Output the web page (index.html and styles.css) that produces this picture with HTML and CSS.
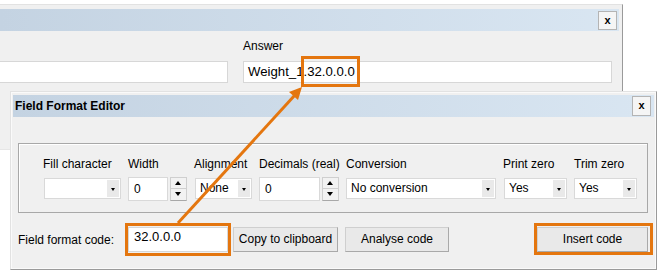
FILE: index.html
```html
<!DOCTYPE html>
<html>
  <head>
    <title>Field Format Editor</title>
    <link rel="stylesheet" href="styles.css">
  </head>
  <body>
    <div class="desktop">
      <!-- Parent dialog (partly hidden) -->
      <div class="window window-back">
        <div class="titlebar">
          <span class="title"></span>
          <span class="close">x</span>
        </div>
        <div class="back-body">
          <div class="field field-left">
            <div class="textbox"></div>
          </div>
          <div class="field field-answer">
            <div class="lbl">Answer</div>
            <div class="textbox">Weight_1.32.0.0.0</div>
          </div>
        </div>
      </div>

      <!-- Field Format Editor -->
      <div class="window window-front">
        <div class="titlebar">
          <span class="title">Field Format Editor</span>
          <span class="close">x</span>
        </div>
        <div class="front-body">
          <div class="group">
            <div class="col col-fill">
              <div class="lbl">Fill character</div>
              <div class="combo"><span class="combo-text"></span><span class="combo-btn"></span></div>
            </div>
            <div class="col col-width">
              <div class="lbl">Width</div>
              <div class="spin">
                <div class="spin-box">0</div>
                <div class="spin-btns"><span class="spin-up"></span><span class="spin-down"></span></div>
              </div>
            </div>
            <div class="col col-align">
              <div class="lbl">Alignment</div>
              <div class="combo"><span class="combo-text">None</span><span class="combo-btn"></span></div>
            </div>
            <div class="col col-decimals">
              <div class="lbl">Decimals (real)</div>
              <div class="spin">
                <div class="spin-box">0</div>
                <div class="spin-btns"><span class="spin-up"></span><span class="spin-down"></span></div>
              </div>
            </div>
            <div class="col col-conv">
              <div class="lbl">Conversion</div>
              <div class="combo"><span class="combo-text">No conversion</span><span class="combo-btn"></span></div>
            </div>
            <div class="col col-print">
              <div class="lbl">Print zero</div>
              <div class="combo"><span class="combo-text">Yes</span><span class="combo-btn"></span></div>
            </div>
            <div class="col col-trim">
              <div class="lbl">Trim zero</div>
              <div class="combo"><span class="combo-text">Yes</span><span class="combo-btn"></span></div>
            </div>
          </div>

          <div class="code-row">
            <span class="code-label">Field format code:</span>
            <div class="textbox code-box">32.0.0.0</div>
            <span class="btn btn-copy">Copy to clipboard</span>
            <span class="btn btn-analyse">Analyse code</span>
            <span class="btn btn-insert">Insert code</span>
          </div>
        </div>
      </div>

      <!-- Callouts -->
      <div class="callout callout-answer"></div>
      <div class="callout callout-code"></div>
      <div class="callout callout-insert"></div>
      <svg class="arrow" width="663" height="271" viewBox="0 0 663 271">
        <line x1="178" y1="223" x2="295" y2="95" stroke="#e4760f" stroke-width="3"/>
        <polygon points="302,87 298,100 289,92" fill="#e4760f"/>
      </svg>
    </div>
  </body>
</html>
```

FILE: styles.css
```css
body, html {
  margin: 0;
  padding: 0;
}
body {
  background-color: #fff;
  font-family: "Liberation Sans", Arial, sans-serif;
  font-size: 12px;
  color: #000;
}
.desktop {
  width: 663px;
  height: 271px;
  position: relative;
  overflow: hidden;
}

/* windows */
.window {
  position: absolute;
  box-sizing: border-box;
  background-color: #f0f0f0;
  border: 1px solid;
  border-color: #e2e2e2 #9a9a9a #9a9a9a #e2e2e2;
}
.window-back {
  left: -4px;
  top: 4px;
  width: 627px;
  height: 146px;
  padding: 4px 3px 0 3px;
  border-bottom-color: #e6e6e6;
}
.window-front {
  left: 10px;
  top: 91px;
  width: 647px;
  padding: 3px 2px 0 2px;
  box-shadow: 0 0 0 1px #fafafa inset;
}
.titlebar {
  height: 22px;
  display: flex;
  align-items: center;
  justify-content: space-between;
  background: linear-gradient(to right, #c4d3e2, #d9e6f2);
}
.title {
  padding-left: 2px;
  font-weight: bold;
}
.close {
  width: 19px;
  height: 19px;
  margin-right: 2px;
  box-sizing: border-box;
  border: 1px solid #b4b4b4;
  background-color: #f5f5f5;
  font-weight: bold;
  font-size: 11px;
  line-height: 16px;
  text-align: center;
}
.window-front .close {
  height: 20px;
  margin-right: 3px;
}

/* parent dialog body */
.back-body {
  display: flex;
  align-items: flex-end;
  gap: 15px;
  padding-top: 8px;
}
.field-left {
  width: 230px;
  margin-left: -2px;
}
.field-answer {
  width: 369px;
}
.field-answer .lbl {
  margin-bottom: 8px;
}
.field-answer .textbox {
  font-size: 13.2px;
  padding: 2px 4px;
  line-height: 16px;
}
.lbl {
  line-height: 14px;
  white-space: nowrap;
}
.textbox {
  box-sizing: border-box;
  height: 22px;
  background-color: #fff;
  border: 1px solid #d7d7d7;
  padding: 3px 4px;
  line-height: 14px;
  white-space: nowrap;
}

/* editor body */
.front-body {
  padding: 26px 6px 17px 5px;
}
.group {
  display: flex;
  align-items: flex-start;
  gap: 7px;
  height: 70px;
  box-sizing: border-box;
  border: 1px solid #a8a8a8;
  box-shadow: 1px 1px 0 #fff inset;
  padding: 13px 0 0 24px;
}
.col .lbl {
  margin-bottom: 7px;
}
.col-fill { width: 78px; }
.col-width { width: 59px; }
.col-align { width: 58px; }
.col-decimals { width: 80px; }
.col-conv { width: 150px; }
.col-print { width: 64px; }
.col-trim { width: 63px; }

.combo {
  display: flex;
  box-sizing: border-box;
  height: 21px;
  background-color: #fff;
  border: 1px solid #d9d9d9;
  padding: 1px;
}
.col-fill .combo, .col-align .combo, .col-print .combo {
  margin-left: 1px;
}
.combo-text {
  flex: 1;
  padding-left: 3px;
  line-height: 17px;
  white-space: nowrap;
  overflow: hidden;
}
.combo-btn {
  width: 12px;
  background-color: #e9e9e9;
  position: relative;
}
.combo-btn::after {
  content: "";
  position: absolute;
  left: 4px;
  top: 8px;
  border-left: 2.5px solid transparent;
  border-right: 2.5px solid transparent;
  border-top: 3px solid #000;
}

.spin {
  display: flex;
  gap: 2px;
  margin-top: -1px;
}
.spin-box {
  box-sizing: border-box;
  flex: 1;
  height: 24px;
  background-color: #fff;
  border: 1px solid #d9d9d9;
  padding: 4px 5px;
  line-height: 14px;
}
.spin-btns {
  width: 17px;
  display: flex;
  flex-direction: column;
}
.spin-up, .spin-down {
  box-sizing: border-box;
  height: 12px;
  border: 1px solid #cfcfcf;
  background-color: #f2f2f2;
  position: relative;
}
.spin-down {
  border-top: none;
  border-bottom: 1px solid #a8a8a8;
}
.spin-up::after, .spin-down::after {
  content: "";
  position: absolute;
  left: 4px;
  border-left: 3.5px solid transparent;
  border-right: 3.5px solid transparent;
}
.spin-up::after {
  top: 3px;
  border-bottom: 4px solid #000;
}
.spin-down::after {
  top: 3px;
  border-top: 4px solid #000;
}

.code-row {
  display: flex;
  align-items: center;
  margin-top: 14px;
}
.code-label {
  width: 110px;
}
.code-box {
  width: 100px;
  height: 25px;
  padding: 2px 5px 0;
  font-size: 13px;
  margin-right: 5px;
}
.btn {
  box-sizing: border-box;
  height: 25px;
  line-height: 22px;
  text-align: center;
  background-color: #e9e9e9;
  border: 1px solid;
  border-color: #cfcfcf #a9a9a9 #a9a9a9 #cfcfcf;
  white-space: nowrap;
}
.btn-copy {
  width: 105px;
  margin-right: 7px;
}
.btn-analyse {
  width: 104px;
}
.btn-insert {
  width: 111px;
  margin-left: auto;
}

/* orange callouts over the screenshot */
.callout {
  position: absolute;
  box-sizing: border-box;
  border: 3px solid #e4760f;
}
.callout-answer {
  left: 301px;
  top: 56px;
  width: 59px;
  height: 31px;
}
.callout-code {
  left: 125px;
  top: 223px;
  width: 106px;
  height: 33px;
}
.callout-insert {
  left: 534px;
  top: 223px;
  width: 119px;
  height: 32px;
}
.arrow {
  position: absolute;
  left: 0;
  top: 0;
  pointer-events: none;
}
```
